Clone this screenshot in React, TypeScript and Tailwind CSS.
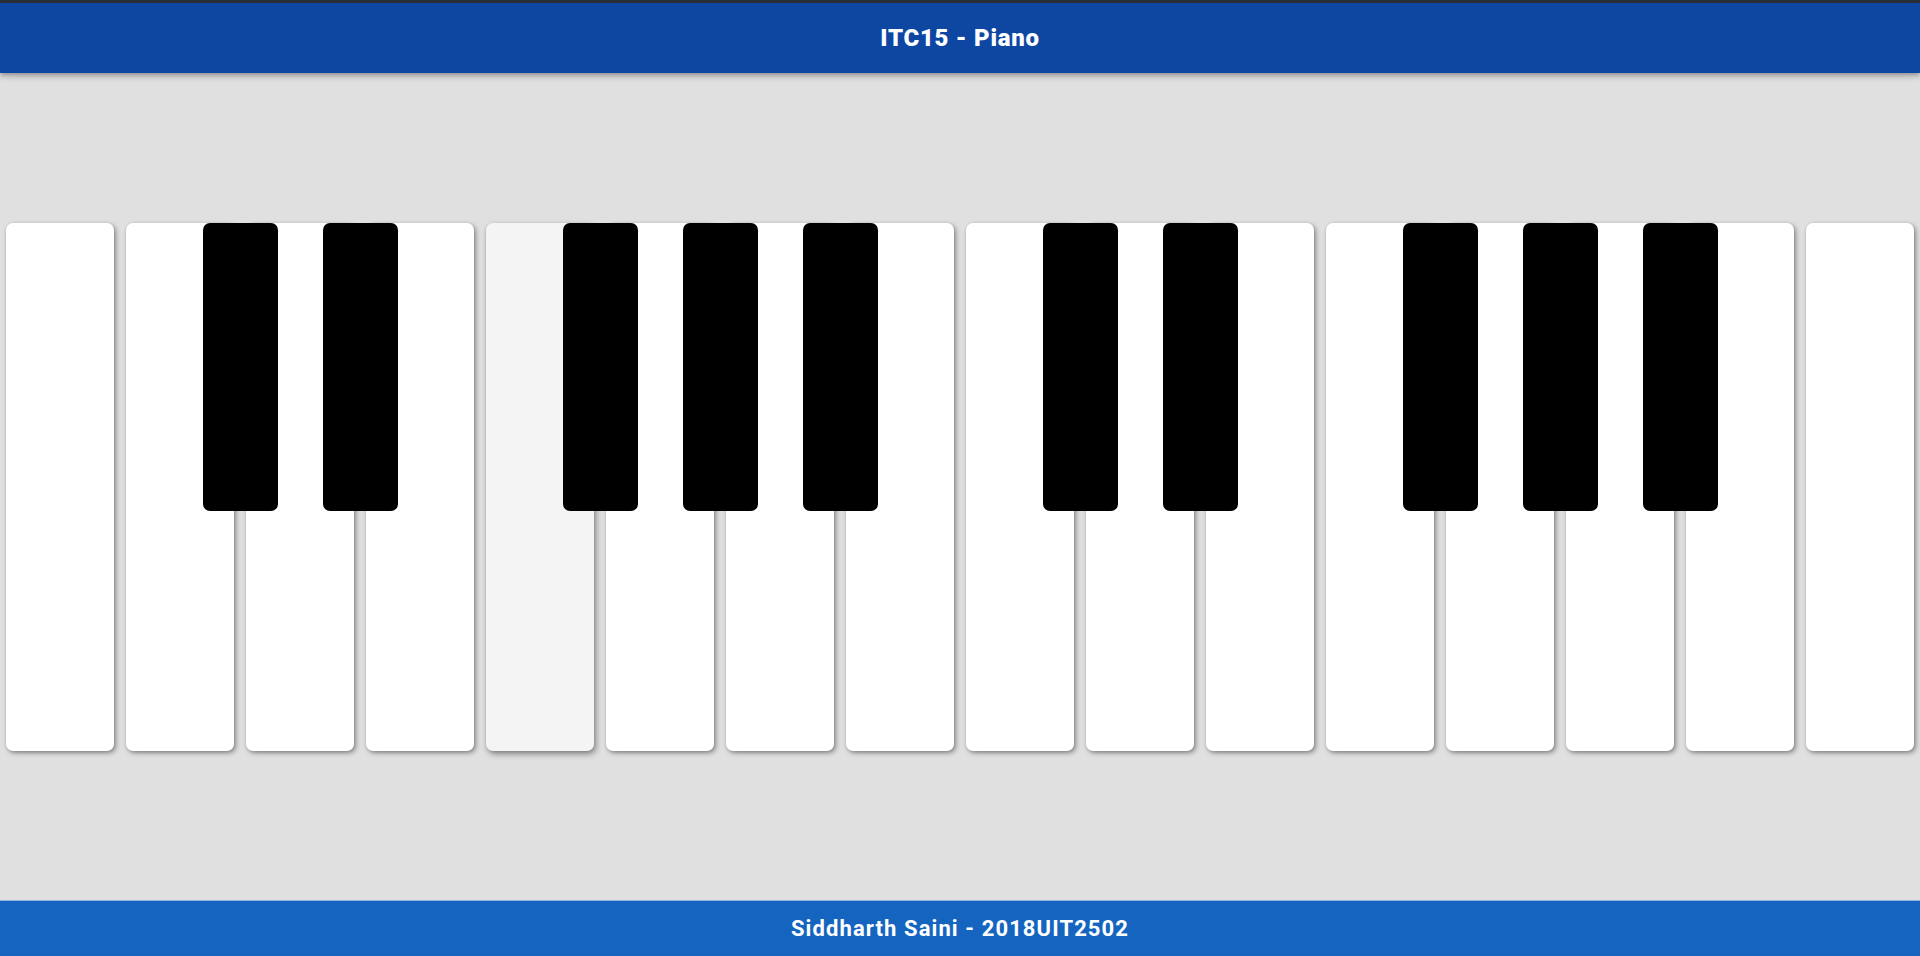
import React from 'react';

// which white keys carry a black key on their right edge
const whiteKeys = [
  { note: 'B3', sharp: false },
  { note: 'C4', sharp: true },
  { note: 'D4', sharp: true },
  { note: 'E4', sharp: false },
  { note: 'F4', sharp: true },
  { note: 'G4', sharp: true },
  { note: 'A4', sharp: true },
  { note: 'B4', sharp: false },
  { note: 'C5', sharp: true },
  { note: 'D5', sharp: true },
  { note: 'E5', sharp: false },
  { note: 'F5', sharp: true },
  { note: 'G5', sharp: true },
  { note: 'A5', sharp: true },
  { note: 'B5', sharp: false },
  { note: 'C6', sharp: false },
];

function WhiteKey({ sharp, active }: { sharp: boolean; active?: boolean }) {
  return (
    <div className="relative w-[120px] h-[528px] px-[6px]">
      <div
        className={
          'w-full h-full rounded-[7px] ' +
          (active
            ? 'bg-[#f4f4f4] shadow-[2px_3px_6px_rgba(0,0,0,0.4),0_1px_3px_rgba(0,0,0,0.12)]'
            : 'bg-white shadow-[2px_2px_5px_rgba(0,0,0,0.38),0_1px_3px_rgba(0,0,0,0.12)]')
        }
      />
      {sharp && (
        <div className="absolute top-0 right-[-38px] z-10 w-[75px] h-[288px] bg-black rounded-[7px]" />
      )}
    </div>
  );
}

export default function App() {
  return (
    <div className="h-screen flex flex-col bg-[#e0e0e0] font-['Roboto',sans-serif]">
      {/* Header */}
      <header className="h-[73px] shrink-0 border-t-[3px] border-[#2a2e36] bg-[#0d47a1] flex items-center justify-center shadow-[0_2px_4px_-1px_rgba(0,0,0,0.2),0_4px_5px_0_rgba(0,0,0,0.14),0_1px_10px_0_rgba(0,0,0,0.12)] z-20">
        <h1 className="text-white text-[24px] font-black tracking-[0.03em]">ITC15 - Piano</h1>
      </header>

      {/* Keyboard */}
      <main className="flex-1 flex items-center">
        <div className="flex">
          {whiteKeys.map((k, i) => (
            <WhiteKey key={k.note} sharp={k.sharp} active={i === 4} />
          ))}
        </div>
      </main>

      {/* Footer */}
      <footer className="h-[56px] shrink-0 bg-[#1565c0] border-t border-[#8fb4e3] flex items-center justify-center">
        <p className="text-white text-[22px] font-bold tracking-[0.05em]">Siddharth Saini - 2018UIT2502</p>
      </footer>
    </div>
  );
}
